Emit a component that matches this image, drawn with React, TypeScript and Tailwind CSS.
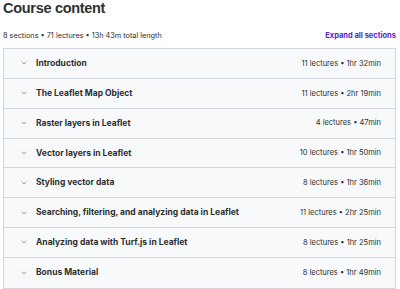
import { ChevronDown } from 'lucide-react';

const sections = [
  { title: 'Introduction', meta: '11 lectures • 1hr 32min' },
  { title: 'The Leaflet Map Object', meta: '11 lectures • 2hr 19min' },
  { title: 'Raster layers in Leaflet', meta: '4 lectures • 47min' },
  { title: 'Vector layers in Leaflet', meta: '10 lectures • 1hr 50min' },
  { title: 'Styling vector data', meta: '8 lectures • 1hr 36min' },
  { title: 'Searching, filtering, and analyzing data in Leaflet', meta: '11 lectures • 2hr 25min' },
  { title: 'Analyzing data with Turf.js in Leaflet', meta: '8 lectures • 1hr 25min' },
  { title: 'Bonus Material', meta: '8 lectures • 1hr 49min' },
];

export default function App() {
  return (
    <div className="w-[400px] h-[289px] bg-white pl-[3px] pr-[4px] font-['Inter','Noto_Sans',sans-serif] text-[#2d2f31] overflow-hidden">
      <h2 className="font-['Liberation_Sans',sans-serif] text-[14.5px] leading-[17px] font-bold tracking-[-0.3px]">
        Course content
      </h2>

      <div className="flex items-center justify-between mt-[14px] h-[10px]">
        <span className="text-[7.3px] text-[#2d2f31]">8 sections • 71 lectures • 13h 43m total length</span>
        <button className="text-[7.5px] font-bold text-[#5624d0]">Expand all sections</button>
      </div>

      {/* Sections */}
      <div className="mt-[7px] border border-[#d1d7dc]">
        {sections.map((s, i) => (
          <div
            key={s.title}
            className={
              'flex items-center justify-between h-[29.85px] bg-[#f7f9fa] pl-[16px] pr-[14px] ' +
              (i < sections.length - 1 ? 'border-b border-[#d1d7dc]' : '')
            }
          >
            <div className="flex items-center gap-[8px]">
              <ChevronDown className="w-[8px] h-[8px] text-[#6a6f73]" strokeWidth={2} />
              <span className="text-[8.5px] font-bold">{s.title}</span>
            </div>
            <span className="text-[7.5px] text-[#2d2f31]">{s.meta}</span>
          </div>
        ))}
      </div>
    </div>
  );
}
